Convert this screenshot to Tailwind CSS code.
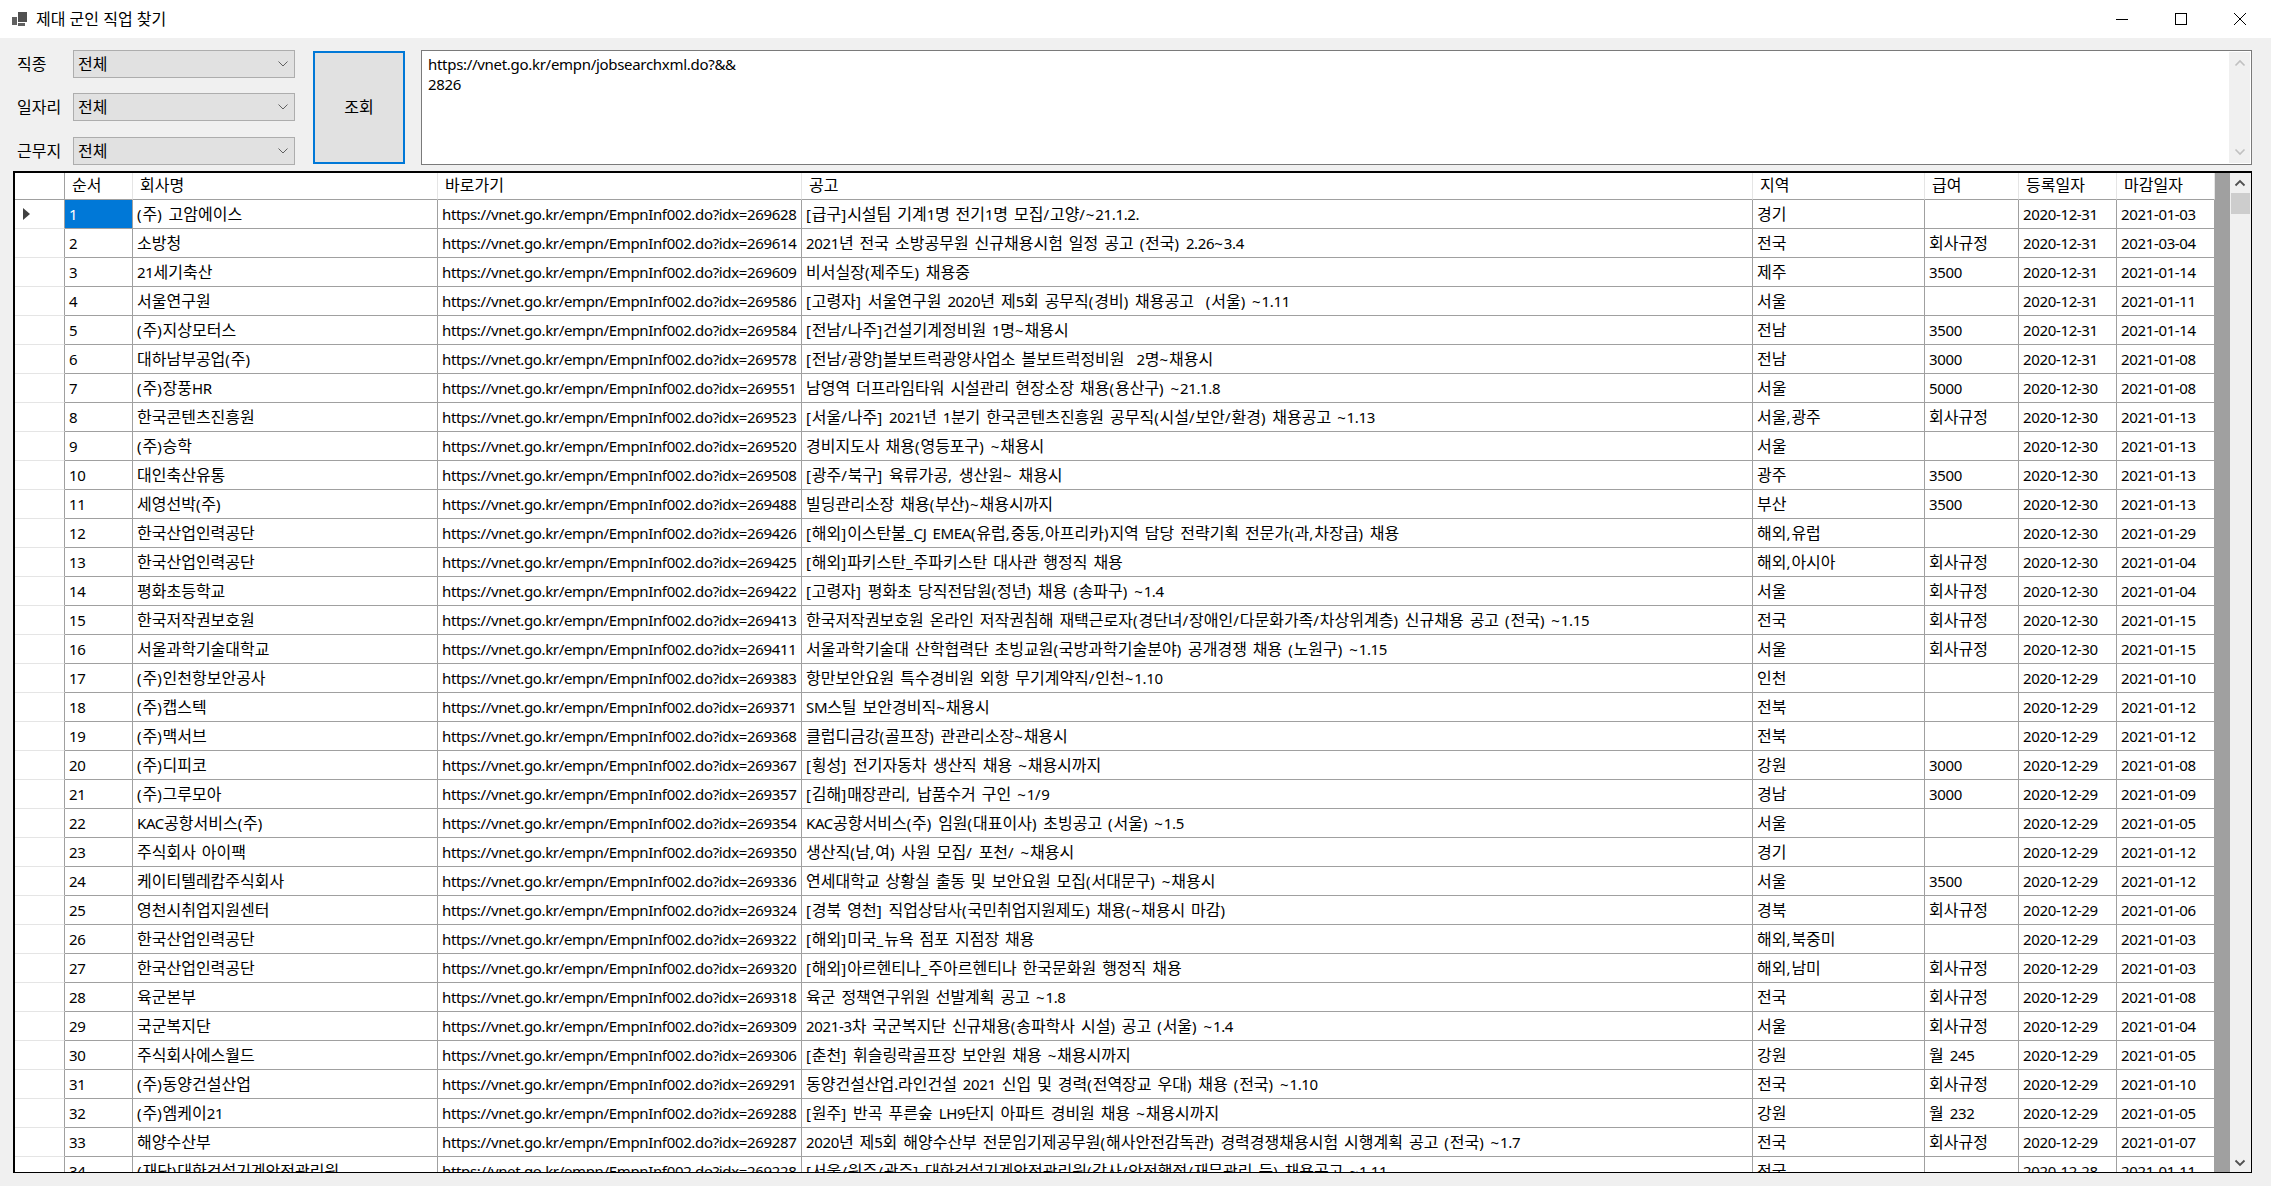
<!DOCTYPE html>
<html lang="ko">
<head>
  <meta charset="UTF-8" />
  <title>제대 군인 직업 찾기</title>
  <script src="https://cdn.jsdelivr.net/npm/@tailwindcss/browser@4"></script>
</head>
<body class="bg-[#f0f0f0] text-black text-[16px] font-['Noto_Sans','Noto_Sans_CJK_KR',sans-serif]">
  <div class="w-[2271px] h-[1186px] overflow-hidden flex flex-col">

    <!-- Title bar -->
    <div class="h-[38px] bg-white flex items-center shrink-0">
      <svg class="ml-[12px] w-[16px] h-[15px]" viewBox="0 0 16 15">
        <rect x="0" y="5" width="5" height="8" fill="#606060" />
        <rect x="6" y="0" width="9" height="10" fill="#505050" />
        <rect x="6" y="11" width="7" height="3" fill="#606060" />
      </svg>
      <span class="ml-[8px]">제대 군인 직업 찾기</span>
      <div class="ml-auto flex items-center">
        <svg class="w-[14px] h-[14px] mr-[45px]" viewBox="0 0 14 14"><path d="M1 7.5H13" stroke="#000" fill="none" /></svg>
        <svg class="w-[14px] h-[14px] mr-[45px]" viewBox="0 0 14 14"><rect x="1.5" y="1.5" width="11" height="11" stroke="#000" fill="none" /></svg>
        <svg class="w-[14px] h-[14px] mr-[24px]" viewBox="0 0 14 14"><path d="M1 1L13 13M13 1L1 13" stroke="#000" fill="none" /></svg>
      </div>
    </div>

    <!-- Search filters -->
    <div class="h-[133px] shrink-0 flex items-start pt-[12px]">
      <div class="ml-[17px] w-[278px] flex flex-col">
        <div class="h-[28px] flex items-center">
          <span class="w-[56px] -mt-[1px]">직종</span>
          <div class="combo w-[222px] h-full bg-[#e1e1e1] border border-[#adadad] flex items-center pl-[4px]">
            <span>전체</span>
            <svg class="ml-auto mr-[5px] w-[12px] h-[8px]" viewBox="0 0 12 8"><path d="M1.5 1.5L6 6L10.5 1.5" stroke="#606060" fill="none" /></svg>
          </div>
        </div>
        <div class="h-[28px] mt-[15px] flex items-center">
          <span class="w-[56px] -mt-[1px]">일자리</span>
          <div class="combo w-[222px] h-full bg-[#e1e1e1] border border-[#adadad] flex items-center pl-[4px]">
            <span>전체</span>
            <svg class="ml-auto mr-[5px] w-[12px] h-[8px]" viewBox="0 0 12 8"><path d="M1.5 1.5L6 6L10.5 1.5" stroke="#606060" fill="none" /></svg>
          </div>
        </div>
        <div class="h-[28px] mt-[16px] flex items-center">
          <span class="w-[56px] -mt-[1px]">근무지</span>
          <div class="combo w-[222px] h-full bg-[#e1e1e1] border border-[#adadad] flex items-center pl-[4px]">
            <span>전체</span>
            <svg class="ml-auto mr-[5px] w-[12px] h-[8px]" viewBox="0 0 12 8"><path d="M1.5 1.5L6 6L10.5 1.5" stroke="#606060" fill="none" /></svg>
          </div>
        </div>
      </div>
      <button class="ml-[18px] mt-[1px] w-[92px] h-[113px] pb-[2px] bg-[#e1e1e1] border-2 border-[#0078d7]">조회</button>
      <div class="ml-[16px] w-[1831px] h-[115px] bg-white border border-[#7a7a7a] flex">
        <div class="flex-1 pl-[6px] pt-[3px] leading-[20px] whitespace-pre font-['Noto_Sans',sans-serif] text-[15px] tracking-[-0.3px]">https://vnet.go.kr/empn/jobsearchxml.do?&amp;&amp;
2826</div>
        <div class="w-[21px] my-[1px] mr-[1px] bg-[#f0f0f0] flex flex-col items-center justify-between py-[7px]">
          <svg class="w-[12px] h-[8px]" viewBox="0 0 12 8"><path d="M1.5 6.5L6 2L10.5 6.5" stroke="#c0c0c0" stroke-width="1.6" fill="none" /></svg>
          <svg class="w-[12px] h-[8px]" viewBox="0 0 12 8"><path d="M1.5 1.5L6 6L10.5 1.5" stroke="#c0c0c0" stroke-width="1.6" fill="none" /></svg>
        </div>
      </div>
    </div>

    <!-- Result grid -->
    <div class="ml-[13px] w-[2239px] h-[1002px] shrink-0 border-l-2 border-t-2 border-r border-b border-black flex">
      <div class="flex-1 overflow-hidden bg-[#a0a0a0]">
        <table class="table-fixed w-[2200px] border-separate border-spacing-0 bg-white">
          <colgroup>
            <col class="w-[50px]" /><col class="w-[68px]" /><col class="w-[305px]" /><col class="w-[364px]" />
            <col class="w-[951px]" /><col class="w-[172px]" /><col class="w-[94px]" /><col class="w-[98px]" /><col class="w-[98px]" />
          </colgroup>
          <thead>
            <tr>
              <th class="h-[27px] p-0 border-r border-r-[#a0a0a0] border-b border-b-[#a0a0a0]"></th>
              <th class="h-[27px] p-0 pl-[7px] pb-[2px] text-left font-normal border-r border-r-[#e5e5e5] border-b border-b-[#a0a0a0]">순서</th>
              <th class="h-[27px] p-0 pl-[7px] pb-[2px] text-left font-normal border-r border-r-[#e5e5e5] border-b border-b-[#a0a0a0]">회사명</th>
              <th class="h-[27px] p-0 pl-[7px] pb-[2px] text-left font-normal border-r border-r-[#e5e5e5] border-b border-b-[#a0a0a0]">바로가기</th>
              <th class="h-[27px] p-0 pl-[7px] pb-[2px] text-left font-normal border-r border-r-[#e5e5e5] border-b border-b-[#a0a0a0]">공고</th>
              <th class="h-[27px] p-0 pl-[7px] pb-[2px] text-left font-normal border-r border-r-[#e5e5e5] border-b border-b-[#a0a0a0]">지역</th>
              <th class="h-[27px] p-0 pl-[7px] pb-[2px] text-left font-normal border-r border-r-[#e5e5e5] border-b border-b-[#a0a0a0]">급여</th>
              <th class="h-[27px] p-0 pl-[7px] pb-[2px] text-left font-normal border-r border-r-[#e5e5e5] border-b border-b-[#a0a0a0]">등록일자</th>
              <th class="h-[27px] p-0 pl-[7px] pb-[2px] text-left font-normal border-r border-r-[#e5e5e5] border-b border-b-[#a0a0a0]">마감일자</th>
            </tr>
          </thead>
          <tbody id="rows"></tbody>
        </table>
      </div>
      <!-- Grid scrollbar -->
      <div class="w-[21px] bg-[#f0f0f0] relative shrink-0">
        <svg class="absolute left-[4px] top-[6px] w-[12px] h-[8px]" viewBox="0 0 12 8"><path d="M1.5 6.5L6 2L10.5 6.5" stroke="#505050" stroke-width="1.8" fill="none" /></svg>
        <div class="absolute left-[1px] top-[20px] w-[19px] h-[21px] bg-[#cdcdcd]"></div>
        <svg class="absolute left-[4px] bottom-[5px] w-[12px] h-[8px]" viewBox="0 0 12 8"><path d="M1.5 1.5L6 6L10.5 1.5" stroke="#505050" stroke-width="1.8" fill="none" /></svg>
      </div>
    </div>
  </div>

  <script>
    const BASE_URL = 'https://vnet.go.kr/empn/EmpnInf002.do?idx=';

    // company, idx, notice, region, pay, registered, deadline
    const jobs = [
      ['(주) 고암에이스', 269628, '[급구]시설팀 기계1명 전기1명 모집/고양/~21.1.2.', '경기', '', '2020-12-31', '2021-01-03'],
      ['소방청', 269614, '2021년 전국 소방공무원 신규채용시험 일정 공고 (전국) 2.26~3.4', '전국', '회사규정', '2020-12-31', '2021-03-04'],
      ['21세기축산', 269609, '비서실장(제주도) 채용중', '제주', '3500', '2020-12-31', '2021-01-14'],
      ['서울연구원', 269586, '[고령자] 서울연구원 2020년 제5회 공무직(경비) 채용공고  (서울) ~1.11', '서울', '', '2020-12-31', '2021-01-11'],
      ['(주)지상모터스', 269584, '[전남/나주]건설기계정비원 1명~채용시', '전남', '3500', '2020-12-31', '2021-01-14'],
      ['대하남부공업(주)', 269578, '[전남/광양]볼보트럭광양사업소 볼보트럭정비원  2명~채용시', '전남', '3000', '2020-12-31', '2021-01-08'],
      ['(주)장풍HR', 269551, '남영역 더프라임타워 시설관리 현장소장 채용(용산구) ~21.1.8', '서울', '5000', '2020-12-30', '2021-01-08'],
      ['한국콘텐츠진흥원', 269523, '[서울/나주] 2021년 1분기 한국콘텐츠진흥원 공무직(시설/보안/환경) 채용공고 ~1.13', '서울,광주', '회사규정', '2020-12-30', '2021-01-13'],
      ['(주)승학', 269520, '경비지도사 채용(영등포구) ~채용시', '서울', '', '2020-12-30', '2021-01-13'],
      ['대인축산유통', 269508, '[광주/북구] 육류가공, 생산원~ 채용시', '광주', '3500', '2020-12-30', '2021-01-13'],
      ['세영선박(주)', 269488, '빌딩관리소장 채용(부산)~채용시까지', '부산', '3500', '2020-12-30', '2021-01-13'],
      ['한국산업인력공단', 269426, '[해외]이스탄불_CJ EMEA(유럽,중동,아프리카)지역 담당 전략기획 전문가(과,차장급) 채용', '해외,유럽', '', '2020-12-30', '2021-01-29'],
      ['한국산업인력공단', 269425, '[해외]파키스탄_주파키스탄 대사관 행정직 채용', '해외,아시아', '회사규정', '2020-12-30', '2021-01-04'],
      ['평화초등학교', 269422, '[고령자] 평화초 당직전담원(정년) 채용 (송파구) ~1.4', '서울', '회사규정', '2020-12-30', '2021-01-04'],
      ['한국저작권보호원', 269413, '한국저작권보호원 온라인 저작권침해 재택근로자(경단녀/장애인/다문화가족/차상위계층) 신규채용 공고 (전국) ~1.15', '전국', '회사규정', '2020-12-30', '2021-01-15'],
      ['서울과학기술대학교', 269411, '서울과학기술대 산학협력단 초빙교원(국방과학기술분야) 공개경쟁 채용 (노원구) ~1.15', '서울', '회사규정', '2020-12-30', '2021-01-15'],
      ['(주)인천항보안공사', 269383, '항만보안요원 특수경비원 외항 무기계약직/인천~1.10', '인천', '', '2020-12-29', '2021-01-10'],
      ['(주)캡스텍', 269371, 'SM스틸 보안경비직~채용시', '전북', '', '2020-12-29', '2021-01-12'],
      ['(주)맥서브', 269368, '클럽디금강(골프장) 관관리소장~채용시', '전북', '', '2020-12-29', '2021-01-12'],
      ['(주)디피코', 269367, '[횡성] 전기자동차 생산직 채용 ~채용시까지', '강원', '3000', '2020-12-29', '2021-01-08'],
      ['(주)그루모아', 269357, '[김해]매장관리, 납품수거 구인 ~1/9', '경남', '3000', '2020-12-29', '2021-01-09'],
      ['KAC공항서비스(주)', 269354, 'KAC공항서비스(주) 임원(대표이사) 초빙공고 (서울) ~1.5', '서울', '', '2020-12-29', '2021-01-05'],
      ['주식회사 아이팩', 269350, '생산직(남,여) 사원 모집/ 포천/ ~채용시', '경기', '', '2020-12-29', '2021-01-12'],
      ['케이티텔레캅주식회사', 269336, '연세대학교 상황실 출동 및 보안요원 모집(서대문구) ~채용시', '서울', '3500', '2020-12-29', '2021-01-12'],
      ['영천시취업지원센터', 269324, '[경북 영천] 직업상담사(국민취업지원제도) 채용(~채용시 마감)', '경북', '회사규정', '2020-12-29', '2021-01-06'],
      ['한국산업인력공단', 269322, '[해외]미국_뉴욕 점포 지점장 채용', '해외,북중미', '', '2020-12-29', '2021-01-03'],
      ['한국산업인력공단', 269320, '[해외]아르헨티나_주아르헨티나 한국문화원 행정직 채용', '해외,남미', '회사규정', '2020-12-29', '2021-01-03'],
      ['육군본부', 269318, '육군 정책연구위원 선발계획 공고 ~1.8', '전국', '회사규정', '2020-12-29', '2021-01-08'],
      ['국군복지단', 269309, '2021-3차 국군복지단 신규채용(송파학사 시설) 공고 (서울) ~1.4', '서울', '회사규정', '2020-12-29', '2021-01-04'],
      ['주식회사에스월드', 269306, '[춘천] 휘슬링락골프장 보안원 채용 ~채용시까지', '강원', '월 245', '2020-12-29', '2021-01-05'],
      ['(주)동양건설산업', 269291, '동양건설산업.라인건설 2021 신입 및 경력(전역장교 우대) 채용 (전국) ~1.10', '전국', '회사규정', '2020-12-29', '2021-01-10'],
      ['(주)엠케이21', 269288, '[원주] 반곡 푸른숲 LH9단지 아파트 경비원 채용 ~채용시까지', '강원', '월 232', '2020-12-29', '2021-01-05'],
      ['해양수산부', 269287, '2020년 제5회 해양수산부 전문임기제공무원(해사안전감독관) 경력경쟁채용시험 시행계획 공고 (전국) ~1.7', '전국', '회사규정', '2020-12-29', '2021-01-07'],
      ['(재단)대한건설기계안전관리원', 269228, '[서울/원주/광주] 대한건설기계안전관리원(감사/안전행정/재무관리 등) 채용공고 ~1.11', '전국', '', '2020-12-28', '2021-01-11'],
    ];

    // Latin runs are set a touch smaller so the widths follow the screenshot
    function latin(text) {
      return `<span class="text-[15px] tracking-[-0.35px]">${text}</span>`;
    }

    // Punctuation sits wider in the original font, so it gets its own spacing
    function t(text) {
      return String(text)
        .replace(/[A-Za-z0-9.\-]+/g, m => latin(m))
        .replace(/[()\/\[\]~,_]+(?![^<]*>)/g, m => `<span class="text-[15px] tracking-[0.9px]">${m}</span>`);
    }

    const cell = 'h-[29px] p-0 pl-[4px] whitespace-pre overflow-hidden border-r border-b border-[#a0a0a0] [word-spacing:1.8px]';

    document.getElementById('rows').innerHTML = jobs.map((job, i) => {
      const [company, idx, notice, region, pay, registered, deadline] = job;
      const selected = i === 0;
      return `<tr>
        <td class="h-[29px] p-0 pl-[8px] border-r border-r-[#a0a0a0] border-b border-b-[#e5e5e5]">${selected ? '<svg class="w-[7px] h-[12px]" viewBox="0 0 7 12"><path d="M0 0L7 6L0 12Z" fill="#404040" /></svg>' : ''}</td>
        <td class="${cell} ${selected ? 'bg-[#0078d7] text-white' : ''}">${latin(i + 1)}</td>
        <td class="${cell}">${t(company)}</td>
        <td class="${cell}">${latin(BASE_URL + idx)}</td>
        <td class="${cell}">${t(notice)}</td>
        <td class="${cell}">${t(region)}</td>
        <td class="${cell}">${t(pay)}</td>
        <td class="${cell}">${latin(registered)}</td>
        <td class="${cell}">${latin(deadline)}</td>
      </tr>`;
    }).join('');
  </script>
</body>
</html>
